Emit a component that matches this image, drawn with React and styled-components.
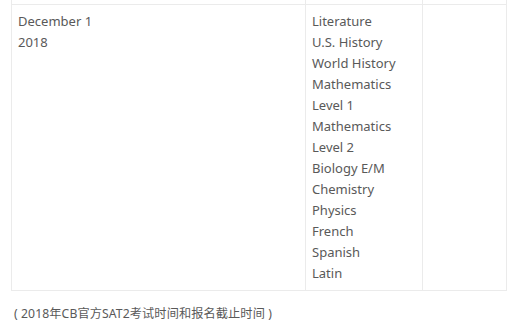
import styled, { createGlobalStyle } from "styled-components";

const GlobalStyle = createGlobalStyle`
  html, body {
    margin: 0;
    padding: 0;
    background: #fff;
  }
  body {
    font-family: "Noto Sans", "Noto Sans CJK SC", sans-serif;
    color: #595959;
    overflow: hidden;
  }
`

const Page = styled.div`
  width: 512px;
  height: 329px;
  padding-left: 11px;
  box-sizing: border-box;
`

const Table = styled.table`
  border-collapse: collapse;
  width: 495px;
  table-layout: fixed;
  font-size: 13px;
  line-height: 21px;
`

const Cell = styled.td`
  border: 1px solid #ebebeb;
  border-top: ${p => (p.$cut ? "none" : "1px solid #ebebeb")};
  padding: ${p => (p.$cut ? "0" : "6px 6px 6px 6px")};
  height: ${p => (p.$cut ? "4px" : "auto")};
  vertical-align: top;
`

const Caption = styled.p`
  margin: 12px 0 0 3px;
  font-size: 12.2px;
  letter-spacing: 0.1px;
  line-height: 21px;
  white-space: pre;
`

const subjects = [
  "Literature",
  "U.S. History",
  "World History",
  "Mathematics",
  "Level 1",
  "Mathematics",
  "Level 2",
  "Biology E/M",
  "Chemistry",
  "Physics",
  "French",
  "Spanish",
  "Latin",
]

export default function App() {
  return (<Page>
    <GlobalStyle/>
    <Table>
      <colgroup>
        <col style={{width: 294}}/>
        <col style={{width: 117}}/>
        <col style={{width: 84}}/>
      </colgroup>
      <tbody>
        <tr>
          <Cell $cut/>
          <Cell $cut/>
          <Cell $cut/>
        </tr>
        <tr>
          <Cell>December 1<br/>2018</Cell>
          <Cell>
            {subjects.map((s, i) => <div key={i}>{s}</div>)}
          </Cell>
          <Cell/>
        </tr>
      </tbody>
    </Table>
    <Caption>( 2018年CB官方SAT2考试时间和报名截止时间 )</Caption>
  </Page>)
}
